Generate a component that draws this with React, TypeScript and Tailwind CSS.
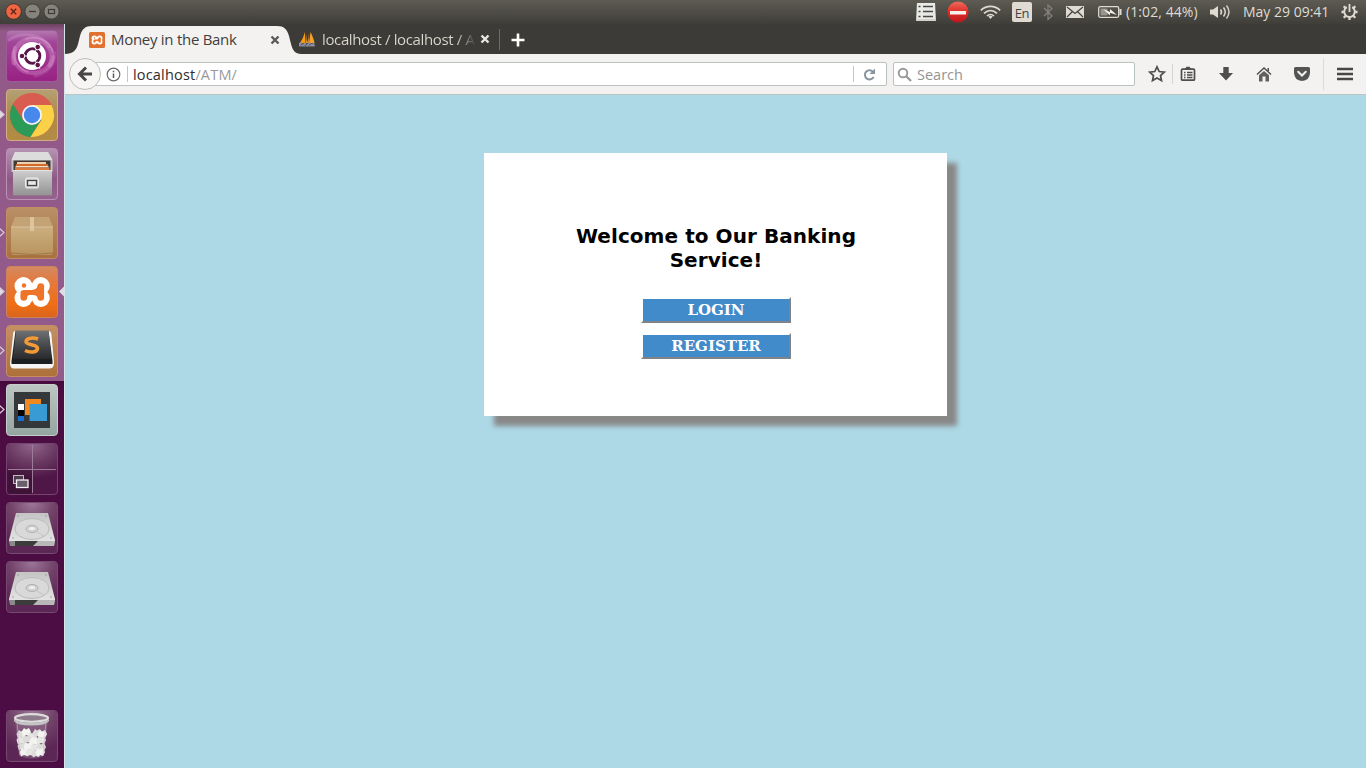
import React from "react";

const UI = "font-['Open_Sans','Noto_Sans',sans-serif]";

/* ---------- launcher ---------- */

function Tile({
  children,
  className,
  left,
  right,
}: {
  children: React.ReactNode;
  className: string;
  left?: "solid" | "outline";
  right?: boolean;
}) {
  return (
    <div className="relative h-[52px] w-full shrink-0">
      {left && (
        <svg className="absolute top-[20px] left-0" width="5" height="11" viewBox="0 0 5 11">
          <path
            d="M-1 1L4 5.500L-1 10Z"
            fill={left === "solid" ? "#e2dbe3" : "none"}
            stroke="#d6cbd6"
            strokeWidth="1.200"
          />
        </svg>
      )}
      {right && (
        <svg className="absolute top-[20px] right-px" width="5" height="11" viewBox="0 0 5 11">
          <path d="M5 0.500L0 5.500L5 10.500Z" fill="#e2dbe3" />
        </svg>
      )}
      <div className={"ml-[6px] h-[52px] w-[52px] overflow-hidden rounded-[4px] border " + className}>
        <svg className="-mt-px -ml-px" width="52" height="52" viewBox="0 0 52 52">
          {children}
        </svg>
      </div>
    </div>
  );
}

function UbuntuArt() {
  return (
    <>
      <g fill="none" stroke="#dc9ad0" strokeLinecap="round">
        <path d="M8 33C5 17 17 6 33 10C44 13 49 25 44 35" strokeWidth="5" opacity=".35" />
        <path d="M3 10C17 1 37 4 43 17" strokeWidth="3" opacity=".3" />
        <path d="M9 18C5 32 13 43 27 43C37 43 45 37 47 27" strokeWidth="4" opacity=".35" />
        <path d="M29 46C42 44 49 34 49 23" strokeWidth="3" opacity=".2" />
        <path d="M20 9C32 5 44 11 47 22" strokeWidth="1.500" opacity=".55" />
        <path d="M8 20C7 31 13 39 22 42" strokeWidth="1.500" opacity=".5" />
      </g>
      <circle cx="26" cy="26" r="14" fill="#fff" />
      <circle cx="26.500" cy="26" r="7.300" fill="none" stroke="#5a1648" strokeWidth="3" />
      <path d="M26.500 26L34 39M26.500 26L34 13M26 26L12 26" stroke="#fff" strokeWidth="0.900" />
      <circle cx="26.500" cy="26" r="5.800" fill="#fff" />
      <g fill="#5a1648" stroke="#fff" strokeWidth="1">
        <circle cx="16" cy="26" r="2.800" />
        <circle cx="31.700" cy="17" r="2.800" />
        <circle cx="31.700" cy="35" r="2.800" />
      </g>
    </>
  );
}

function ChromeArt() {
  return (
    <>
      <circle cx="26" cy="26" r="22" fill="#da5b4e" />
      <path d="M7 15A22 22 0 0 0 24.500 48L35 31L26 26L17 31Z" fill="#2c9b58" />
      <path d="M26 16H45.500A22 22 0 0 1 24.500 48L35.500 31Z" fill="#fbd247" />
      <path d="M7 15A22 22 0 0 1 45.500 16H26L16 26Z" fill="#d95c50" />
      <circle cx="26" cy="26" r="10" fill="#f5f5f5" />
      <circle cx="26" cy="26" r="8.200" fill="#4688ec" />
    </>
  );
}

function FilesArt() {
  return (
    <>
      <defs>
        <linearGradient id="cab" x1="0" y1="0" x2="0" y2="1">
          <stop offset="0" stopColor="#cfcfcf" />
          <stop offset="1" stopColor="#929292" />
        </linearGradient>
      </defs>
      <path d="M9 4H42L46.500 12V24H5.500V12Z" fill="#c4c4c4" />
      <path d="M9 4H42L46.500 12H5.500Z" fill="#dcdcdc" />
      <rect x="7.500" y="12.500" width="37" height="11" fill="#413b38" />
      <rect x="11" y="14" width="29" height="2" fill="#f0cfae" />
      <rect x="10" y="16" width="32" height="2" fill="#cf6b2b" />
      <rect x="9.500" y="18" width="33" height="1.500" fill="#f8e0c6" />
      <rect x="9" y="19.500" width="34.500" height="3" fill="#dc7c40" />
      <path d="M7 22H46V46.500Q46 47.500 45 47.500H8Q7 47.500 7 46.500Z" fill="url(#cab)" />
      <path d="M7 22.500H46" stroke="#e3e3e3" />
      <rect x="19.500" y="30" width="13" height="10" rx="1.500" fill="#d2d2d2" stroke="#eee" />
      <rect x="21.500" y="32.500" width="9" height="5" fill="#e8e8e8" stroke="#444" strokeWidth="1.300" />
    </>
  );
}

function BoxArt() {
  return (
    <>
      <defs>
        <linearGradient id="box" x1="0" y1="0" x2="0" y2="1">
          <stop offset="0" stopColor="#cbae80" />
          <stop offset="1" stopColor="#b9945f" />
        </linearGradient>
      </defs>
      <path d="M9 10H43L47 20H5Z" fill="#c3a376" />
      <path d="M5 20H47V45Q47 48 44 48H8Q5 48 5 45Z" fill="url(#box)" />
      <path d="M5 20H47" stroke="#d8bf96" />
      <rect x="24" y="10" width="4" height="14" fill="#e2cba6" opacity=".8" />
      <path d="M5 46Q26 49 47 46" stroke="#8d6437" fill="none" opacity=".6" />
    </>
  );
}

/* Four white lobes around a dumbbell-shaped bone. */
function XamppMark() {
  return (
    <>
      <g fill="#fff">
        <circle cx="17.500" cy="20" r="9" />
        <circle cx="34.800" cy="20" r="9" />
        <circle cx="17.500" cy="32" r="9" />
        <circle cx="34.800" cy="32" r="9" />
        <rect x="14" y="19.500" width="24" height="13" />
      </g>
      <g fill="#ee7429">
        <circle cx="18" cy="19.500" r="2.200" />
        <circle cx="17.800" cy="31.500" r="3.300" />
        <circle cx="34.800" cy="31.500" r="3.300" />
        <circle cx="34.800" cy="20.500" r="3.300" />
        <path d="M14.500 31V26Q15 24 18 24H26Q31 23.500 31.500 20H38.100V31.500H31.500Q31 29 27 29H23Q21 29.500 21 32Z" />
      </g>
    </>
  );
}

function SublimeArt() {
  return (
    <>
      <defs>
        <linearGradient id="subl" x1="0" y1="0" x2="0" y2="1">
          <stop offset="0" stopColor="#6f7173" />
          <stop offset=".6" stopColor="#414346" />
          <stop offset="1" stopColor="#292a2c" />
        </linearGradient>
      </defs>
      <path d="M9 6H43Q45 6 45.500 10L48 37Q48 43.500 44 43.500H8Q4 43.500 4 38L7 10Q7 6 9 6Z" fill="#f5f5f5" />
      <path d="M9.500 6H42.500L46.500 36V39H5.500V36Z" fill="#1d1e20" />
      <path d="M10 5.500H42.500L45.500 34H7Z" fill="url(#subl)" />
      <path
        d="M32 14C28 12.500 20.500 12.500 20 16.500C19.500 20.500 32 19 31.500 23.500C31 27.500 24 28 19 25.500"
        fill="none"
        stroke="#f39a35"
        strokeWidth="3.600"
      />
    </>
  );
}

function BlocksArt() {
  return (
    <>
      <rect x="8" y="8" width="36" height="36" fill="#34383b" />
      <rect x="19" y="15" width="16" height="16" fill="#ef881d" />
      <rect x="12" y="20" width="6" height="6" fill="#fff" />
      <rect x="12" y="26" width="6" height="6" fill="#050505" />
      <rect x="12" y="32" width="6" height="5" fill="#1470d2" />
      <rect x="23.500" y="20" width="17.500" height="17" fill="#389bd3" />
    </>
  );
}

function WorkspacesArt() {
  return (
    <>
      <rect x="0" y="27" width="26" height="25" fill="#210b1e" opacity=".35" />
      <path d="M26.500 2V50M2 26.500H50" stroke="#9c7c99" strokeWidth="1" />
      <rect x="7.500" y="32.500" width="10" height="8" fill="#4d3c4b" stroke="#c5bac4" />
      <rect x="10.500" y="37" width="11.500" height="7.500" fill="#69606a" stroke="#f4eff4" strokeWidth="1.300" />
    </>
  );
}

function DriveArt({ id }: { id: string }) {
  return (
    <>
      <defs>
        <linearGradient id={id} x1="0" y1="0" x2="0" y2="1">
          <stop offset="0" stopColor="#c4c4c4" />
          <stop offset="1" stopColor="#e4e4e4" />
        </linearGradient>
      </defs>
      <path d="M10 11H42L49 38V40H3V38Z" fill={`url(#${id})`} />
      <path d="M3 39H49L48 44H4Z" fill="#8a8a8a" />
      <path d="M9 39H36L30 44H9Z" fill="#3c3c3c" />
      <path d="M32 39H49L48 44H27Z" fill="#b8b8b8" />
      <ellipse cx="26" cy="27" rx="17" ry="10.500" fill="#d9d9d9" stroke="#bcbcbc" />
      <ellipse cx="26" cy="27" rx="6" ry="3.500" fill="#d2d2d2" stroke="#b0b0b0" />
      <ellipse cx="26" cy="26.500" rx="3" ry="1.500" fill="#f0f0f0" />
      <path d="M31 30L38 34" stroke="#c6c6c6" />
      <g fill="#999">
        <circle cx="12" cy="14" r=".8" />
        <circle cx="40" cy="14" r=".8" />
        <circle cx="7" cy="36" r=".8" />
        <circle cx="45" cy="36" r=".8" />
      </g>
    </>
  );
}

function TrashArt() {
  const scraps = [
    [15, 24], [20, 22], [26, 26], [31, 23], [36, 24], [15, 30], [21, 29], [28, 31], [35, 30],
    [16, 36], [22, 36], [29, 37], [35, 37], [18, 42], [24, 42], [30, 43], [34, 42],
  ];
  return (
    <>
      <path d="M9 9L13 46Q26 51 38 46L42 9Z" fill="#92728f" opacity=".5" />
      {scraps.map(([x, y], i) => (
        <path
          key={i}
          d={`M${x - 4.5} ${y}L${x - 2} ${y - 4}L${x} ${y - 2.5}L${x + 3} ${y - 4}L${x + 5} ${y}L${x + 3} ${y + 4}L${x} ${y + 3}L${x - 3} ${y + 4.5}Z`}
          fill={i % 3 === 0 ? "#dcdcda" : i % 3 === 1 ? "#f3f3f0" : "#e6e6e4"}
        />
      ))}
      <path d="M11 11L14 45M40 11L37 45" stroke="#c8b6c6" opacity=".6" />
      <ellipse cx="25.500" cy="8" rx="16.500" ry="3.800" fill="#8d7a8b" stroke="#dcdcdc" strokeWidth="2.200" />
      <path d="M8 9Q10 12.500 25.500 12.500Q41 12.500 43 9V11Q40 15.500 25.500 15.500Q11 15.500 8 11Z" fill="#c4c4c4" />
    </>
  );
}

function Launcher() {
  return (
    <aside className="flex w-[65px] shrink-0 flex-col gap-[7px] bg-[linear-gradient(to_bottom,#6b4162_0px,#925988_7px,#935b8b_357px,#45093c_357px,#4c0d43_370px,#4b0d43_100%)] pt-[6px] pb-[6px] shadow-[inset_-1px_0_0_#d5e3ea]">
      <Tile className="border-[#9d5b99] bg-[linear-gradient(to_bottom,#b179ae_0%,#a14699_22%,#992183_100%)]">
        <UbuntuArt />
      </Tile>
      <Tile left="solid" className="border-[#cfaf86] bg-[linear-gradient(to_bottom,#b5a075,#ae8a48_50%,#b38b43)]">
        <ChromeArt />
      </Tile>
      <Tile className="border-[#bd91b7] bg-[linear-gradient(to_bottom,#b493b1,#8c5885_60%,#96638f)]">
        <FilesArt />
      </Tile>
      <Tile left="outline" className="border-[#c38d63] bg-[linear-gradient(to_bottom,#b98f66,#a9713f)]">
        <BoxArt />
      </Tile>
      <Tile left="solid" right className="border-[#cf8259] bg-[linear-gradient(to_bottom,#d48a62_0%,#e27a3e_28%,#ef6e16_75%,#d9651b_100%)]">
        <XamppMark />
      </Tile>
      <Tile left="outline" className="border-[#c78c61] bg-[linear-gradient(to_bottom,#c39064,#ad7039)]">
        <SublimeArt />
      </Tile>
      <Tile left="outline" className="border-[#c5cfca] bg-[linear-gradient(to_bottom,#bdc5c2,#95a6a1)]">
        <BlocksArt />
      </Tile>
      <Tile className="border-[#77446f] bg-[radial-gradient(ellipse_90%_70%_at_50%_0%,#91668c_0%,#6d3d65_50%,#4f1747_100%)]">
        <WorkspacesArt />
      </Tile>
      <Tile className="border-[#744a70] bg-[radial-gradient(ellipse_90%_80%_at_50%_0%,#9c7799_0%,#724269_50%,#5c2755_100%)]">
        <DriveArt id="drive-a" />
      </Tile>
      <Tile className="border-[#744a70] bg-[radial-gradient(ellipse_90%_80%_at_50%_0%,#9c7799_0%,#724269_50%,#5c2755_100%)]">
        <DriveArt id="drive-b" />
      </Tile>
      <div className="mt-auto">
        <Tile className="border-[#744a70] bg-[radial-gradient(ellipse_90%_80%_at_50%_0%,#9c7799_0%,#724269_50%,#5c2755_100%)]">
          <TrashArt />
        </Tile>
      </div>
    </aside>
  );
}

/* ---------- system panel ---------- */

function WindowButtons() {
  return (
    <svg width="64" height="24" viewBox="0 0 64 24">
      <circle cx="13.500" cy="11.500" r="7.800" fill="#ef6541" stroke="#2f2e2b" strokeWidth=".8" />
      <path d="M10.800 8.800L16.200 14.200M16.200 8.800L10.800 14.200" stroke="#5c281b" strokeWidth="1.400" />
      <circle cx="32.500" cy="11.500" r="7.600" fill="#86837a" stroke="#383732" strokeWidth=".8" />
      <path d="M29 11.500H36" stroke="#3c3b37" strokeWidth="1.300" />
      <circle cx="51.500" cy="11.500" r="7.600" fill="#86837a" stroke="#383732" strokeWidth=".8" />
      <rect x="48.500" y="9.500" width="6" height="4" fill="none" stroke="#3c3b37" strokeWidth="1.200" />
    </svg>
  );
}

function Panel() {
  return (
    <header
      className={
        "flex h-[24px] shrink-0 items-center bg-[linear-gradient(to_bottom,#5d5b52,#3f3e39)] text-[14px] leading-[24px] text-[#dfdbd2] " +
        UI
      }
    >
      <WindowButtons />
      <svg className="ml-auto" width="22" height="24" viewBox="0 0 22 24">
        <path d="M2 3H20L21 21H1Z" fill="#e9e9e5" />
        <path d="M8 6.500H18M8 11.500H18M8 16.500H18" stroke="#494844" strokeWidth="1.300" />
        <path d="M3.500 6.500H5.500M3.500 11.500H5.500M3.500 16.500H5.500" stroke="#494844" strokeWidth="1.500" />
        <path d="M1 20H21" stroke="#bcbcb7" />
      </svg>
      <svg className="ml-[10px]" width="22" height="24" viewBox="0 0 22 24">
        <defs>
          <linearGradient id="stop" x1="0" y1="0" x2="0" y2="1">
            <stop offset="0" stopColor="#ef6b5d" />
            <stop offset=".5" stopColor="#dd2c26" />
            <stop offset="1" stopColor="#bd1621" />
          </linearGradient>
        </defs>
        <circle cx="11" cy="12" r="10.500" fill="url(#stop)" />
        <rect x="3" y="11" width="16" height="3.500" fill="#f9eee9" />
      </svg>
      <svg className="ml-[11px]" width="21" height="24" viewBox="0 0 21 24" fill="none" stroke="#dfdbd2" strokeWidth="1.700">
        <path d="M.8 10.300C6.500 5 14.500 5 20.200 10.300" />
        <path d="M4 13.300C8 9.600 13 9.600 17 13.300" />
        <path d="M7 16C9 14 12 14 14 16" />
        <path d="M8.300 16.500L10.500 19L12.700 16.500Q10.500 15 8.300 16.500Z" fill="#dfdbd2" stroke="none" />
      </svg>
      <div className="ml-[11px] flex h-[20px] w-[20px] items-center justify-center rounded-[2px] bg-[#dfdbd2] pt-px text-[13px] tracking-[-0.4px] text-[#45443f]">
        En
      </div>
      <svg className="ml-[11px]" width="10" height="24" viewBox="0 0 10 24">
        <path d="M1 8L9 16L5 19.500V5L9 8.500L1 16" fill="none" stroke="#85837b" strokeWidth="1.200" />
      </svg>
      <svg className="ml-[13px]" width="18" height="24" viewBox="0 0 18 24">
        <rect x="0" y="6" width="18" height="12" fill="#dfdbd2" />
        <path d="M1 7L9 13.500L17 7M1 17L6.500 11.500M17 17L11.500 11.500" fill="none" stroke="#45443f" strokeWidth="1.200" />
      </svg>
      <svg className="ml-[14px]" width="24" height="24" viewBox="0 0 24 24">
        <rect x=".7" y="6.700" width="20" height="10.600" rx="1.500" fill="none" stroke="#dfdbd2" strokeWidth="1.300" />
        <rect x="2.500" y="8.500" width="7" height="7" fill="#96948b" />
        <rect x="21.500" y="9" width="2" height="6" fill="#dfdbd2" />
        <path d="M5 9L12 12L12 9L19 15L12 12.800V15.500Z" fill="#f3f1ea" />
      </svg>
      <span className="ml-[4px] w-[73px] tracking-[0.08px] whitespace-nowrap">(1:02, 44%)</span>
      <svg className="ml-[11px]" width="21" height="24" viewBox="0 0 21 24">
        <path d="M0 9.500H3L8 6V18L3 14.500H0Z" fill="#dfdbd2" />
        <g fill="none" stroke="#dfdbd2" strokeWidth="1.500">
          <path d="M10.500 9.500Q12.500 12 10.500 14.500" />
          <path d="M13.500 7.500Q17 12 13.500 16.500" />
          <path d="M16.500 5.500Q21.500 12 16.500 18.500" opacity=".9" />
        </g>
      </svg>
      <span className="ml-[12px] w-[88px] whitespace-nowrap">May 29 09:41</span>
      <svg className="mr-[8px] ml-[10px]" width="17" height="24" viewBox="0 0 17 24">
        <g fill="none" stroke="#dfdbd2">
          <path d="M5.800 7.200A5.300 5.300 0 1 0 11.200 7.200" strokeWidth="2" />
          <path d="M8.500 4V12" strokeWidth="1.800" />
          <path d="M8.500 17.500V20M2.800 12H.5M14.200 12H16.500M4.500 16L2.700 17.800M12.500 16L14.300 17.800M4.500 8L2.700 6.200M12.500 8L14.300 6.200" strokeWidth="2.300" />
        </g>
      </svg>
    </header>
  );
}

/* ---------- browser chrome ---------- */

function CloseMark({ color }: { color: string }) {
  return (
    <svg width="10" height="10" viewBox="0 0 10 10">
      <path d="M1.500 1.500L8.500 8.500M8.500 1.500L1.500 8.500" stroke={color} strokeWidth="2.400" />
    </svg>
  );
}

function TabStrip() {
  return (
    <div className={"flex h-[30px] shrink-0 items-center bg-[#3c3b37] text-[15px] " + UI}>
      <div className="relative h-[30px] w-[236px]">
        <svg className="absolute top-0 left-0" width="236" height="30" viewBox="0 0 236 30">
          <path
            d="M0 30C8 29.500 11 27 13 20L15 12C17 5 20 2 27 2H212C219 2 222 5 224 12L226 20C228 27 230 29.500 236 30Z"
            fill="#f3f2f1"
          />
        </svg>
        <div className="relative flex h-[31px] items-center pl-[24px] text-[#403f3d]">
          <svg width="16" height="16" viewBox="0 0 52 52">
            <rect width="52" height="52" rx="5" fill="#e0712f" />
            <XamppMark />
          </svg>
          <span className="ml-[6px] w-[152px] tracking-[-0.28px] whitespace-nowrap">Money in the Bank</span>
          <span className="ml-[7px]">
            <CloseMark color="#5a5956" />
          </span>
        </div>
      </div>
      <div className="flex h-[32px] items-center text-[#dcd9d0]">
        <svg className="-ml-[3px]" width="18" height="16" viewBox="0 0 18 16">
          <path d="M7 1V12L2 12Q5 8 7 1Z" fill="#f89c0e" />
          <path d="M8 3L9 12H7.500ZM12.500 1Q16 8 16.500 12H11Z" fill="#f6a126" />
          <path d="M11 2V12H8.500Q11 8 11 2Z" fill="#c7853a" />
          <path d="M1 12L3 11L5 13L7 11.500L9 13L12 11L14 13L16 11.500L17 15.500H1Z" fill="#8d8b9d" />
          <path d="M3 14.500L5 12.500M7 15L9 12.500M11 14.500L13 12.500" stroke="#45445c" />
        </svg>
        <span className="ml-[6px] w-[154px] bg-[linear-gradient(to_right,#dcd9d0_135px,#3c3b37_154px)] bg-clip-text tracking-[-0.37px] whitespace-nowrap text-transparent">
          localhost / localhost / A
        </span>
        <span className="ml-[4px]">
          <CloseMark color="#e9e7e0" />
        </span>
      </div>
      <div className="mt-px ml-[9px] h-[21px] w-px bg-[#6d6c68]" />
      <svg className="mt-[2px] ml-[11px]" width="14" height="14" viewBox="0 0 14 14">
        <path d="M7 .5V13.500M.5 7H13.500" stroke="#fff" strokeWidth="2.600" />
      </svg>
    </div>
  );
}

function Toolbar() {
  return (
    <div
      className={
        "flex h-[41px] shrink-0 items-center border-b border-[#b9c6c5] bg-[#f3f2f1] text-[14.500px] text-[#2d2d2d] " + UI
      }
    >
      <div className="z-10 ml-[4px] flex h-[32px] w-[32px] items-center justify-center rounded-full border border-[#bebdb9] bg-[#f6f5f4]">
        <svg width="16" height="16" viewBox="0 0 16 16">
          <path d="M9 1.500L2.500 8L9 14.500M3 8H15" fill="none" stroke="#474747" strokeWidth="3" />
        </svg>
      </div>
      <div className="-ml-[12px] flex h-[24px] w-[798px] items-center rounded-r-[2px] border border-[#b9c3c0] bg-white">
        <svg className="ml-[16px]" width="15" height="15" viewBox="0 0 15 15">
          <circle cx="7.500" cy="7.500" r="6.300" fill="none" stroke="#6a6a6a" strokeWidth="1.200" />
          <path d="M7.500 6.500V11M7.500 3.800V5.300" stroke="#5b5b5b" strokeWidth="1.500" />
        </svg>
        <div className="ml-[6px] h-[16px] w-px bg-[#c4c4c4]" />
        <span className="mt-px ml-[5px] tracking-[0.18px] whitespace-nowrap">
          localhost<span className="text-[#9a9a9a]">/ATM/</span>
        </span>
        <div className="ml-auto h-[16px] w-px bg-[#c6c9c9]" />
        <svg className="mr-[10px] ml-[9px]" width="13" height="13" viewBox="0 0 13 13">
          <path d="M10 3.800A4.600 4.600 0 1 0 10.600 9" fill="none" stroke="#8795a0" strokeWidth="2" />
          <path d="M12 .5V6H6.500Z" fill="#8795a0" />
        </svg>
      </div>
      <div className="ml-[6px] flex h-[24px] w-[242px] items-center rounded-[2px] border border-[#b9c3c0] bg-white text-[#949494]">
        <svg className="ml-[3px]" width="15" height="15" viewBox="0 0 15 15">
          <circle cx="6" cy="6" r="4.300" fill="none" stroke="#989898" strokeWidth="1.900" />
          <path d="M9 9L14 14" stroke="#989898" strokeWidth="2.300" />
        </svg>
        <span className="mt-px ml-[5px]">Search</span>
      </div>
      <svg className="ml-[13px]" width="18" height="18" viewBox="0 0 18 18">
        <path
          d="M9 1.800L11.200 6.500L16.300 7.100L12.500 10.500L13.500 15.600L9 13L4.500 15.600L5.500 10.500L1.700 7.100L6.800 6.500Z"
          fill="none"
          stroke="#4e4e4e"
          strokeWidth="1.700"
        />
      </svg>
      <div className="ml-[6px] h-[20px] w-px bg-[#d6d5d2]" />
      <svg className="ml-[7px]" width="16" height="16" viewBox="0 0 16 16">
        <rect x="1.500" y="3.200" width="13" height="11" rx="1" fill="none" stroke="#4e4e4e" strokeWidth="1.700" />
        <path d="M4.500 3.500L6.500 .8H9.500L11.500 3.500Z" fill="#4e4e4e" />
        <path d="M4 6.500H5.500M7 6.500H12.500M4 9H5.500M7 9H12.500M4 11.500H5.500M7 11.500H12.500" stroke="#4e4e4e" strokeWidth="1.300" />
      </svg>
      <svg className="ml-[22px]" width="16" height="16" viewBox="0 0 16 16">
        <path d="M5.300 1H10.700V7H15L8 14.500L1 7H5.300Z" fill="#4e4e4e" />
      </svg>
      <svg className="ml-[22px]" width="16" height="16" viewBox="0 0 16 16">
        <path d="M1 8.500L8 2L15 8.500" fill="none" stroke="#4e4e4e" strokeWidth="1.500" />
        <path d="M3 9.300L8 4.900L13 9.300V15.500H9.500V10.500H6.500V15.500H3Z" fill="#5f5f5f" />
        <rect x="11.500" y="2" width="1.500" height="3" fill="#4e4e4e" />
      </svg>
      <svg className="ml-[22px]" width="16" height="16" viewBox="0 0 16 16">
        <path d="M1.500 1H14.500Q16 1 16 2.500V7Q15.500 14.500 8 15Q.5 14.500 0 7V2.500Q0 1 1.500 1Z" fill="#545454" />
        <path d="M4.200 5.800L8 9.500L11.800 5.800" fill="none" stroke="#f3f2f1" strokeWidth="2" strokeLinecap="round" />
      </svg>
      <div className="ml-[13px] h-[32px] w-px bg-[#dddbd8]" />
      <svg className="ml-[13px]" width="16" height="14" viewBox="0 0 16 14">
        <path d="M0 2H16M0 7H16M0 12H16" stroke="#474747" strokeWidth="2.400" />
      </svg>
    </div>
  );
}

/* ---------- page ---------- */

function BankButton({ children }: { children: React.ReactNode }) {
  return (
    <button
      type="button"
      className="flex h-[26px] w-[150px] items-center justify-center border-2 border-t-white border-r-[#808488] border-b-[#808488] border-l-white bg-[#428bca] font-['DejaVu_Serif',serif] text-[15px] leading-[20px] font-bold text-white"
    >
      {children}
    </button>
  );
}

function BankPage() {
  return (
    <main className="flex-1 bg-[#add8e6] pt-[58px]">
      <section className="ml-[419px] flex h-[263px] w-[463px] flex-col items-center bg-white pt-[71px] shadow-[10px_10px_5px_#888888]">
        <h1 className="w-[320px] pl-px text-center font-['DejaVu_Sans',sans-serif] text-[20px] leading-[24px] font-bold tracking-[0.06px] text-black">
          Welcome to Our Banking Service!
        </h1>
        <div className="mt-[25px] flex flex-col gap-[10px] pl-px">
          <BankButton>LOGIN</BankButton>
          <BankButton>REGISTER</BankButton>
        </div>
      </section>
    </main>
  );
}

export default function App() {
  return (
    <div className="flex h-[768px] w-[1366px] flex-col overflow-hidden">
      <Panel />
      <div className="flex min-h-0 flex-1">
        <Launcher />
        <div className="flex min-w-0 flex-1 flex-col">
          <TabStrip />
          <Toolbar />
          <BankPage />
        </div>
      </div>
    </div>
  );
}
